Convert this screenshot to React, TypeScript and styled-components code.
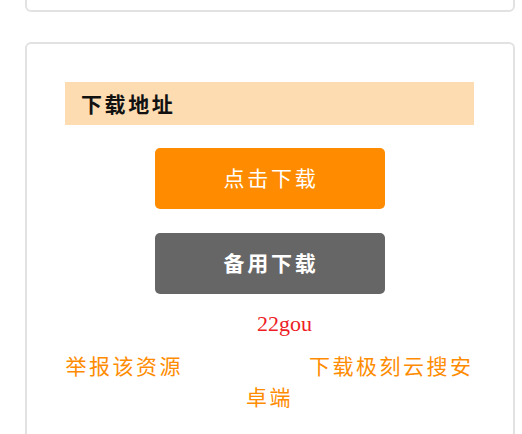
import React from 'react';
import styled, { createGlobalStyle } from 'styled-components';

const GlobalStyle = createGlobalStyle`
  html, body {
    margin: 0;
    padding: 0;
    background-color: #ffffff;
  }
  body {
    font-family: 'Noto Sans CJK SC', 'Noto Sans', sans-serif;
    overflow: hidden;
  }
`;

const Page = styled.div`
  padding: 0 7px 0 25px;
`;

const Card = styled.div`
  border: 2px solid #e2e2e2;
  border-radius: 6px;
  background-color: #ffffff;
`;

const PrevCard = styled(Card)`
  height: 40px;
  margin-top: -32px;
`;

const DownloadCard = styled(Card)`
  margin-top: 30px;
  padding: 38px 39px 40px 38px;
`;

const TitleBar = styled.h3`
  margin: 0;
  height: 43px;
  padding: 0 0 2px 16px;
  box-sizing: border-box;
  display: flex;
  align-items: center;
  background-color: #fddcb1;
  color: #111111;
  font-size: 21px;
  font-weight: 700;
  letter-spacing: 2.6px;
`;

const ButtonList = styled.div`
  display: flex;
  flex-direction: column;
  align-items: center;
  gap: 24px;
  margin-top: 23px;
`;

const DownloadButton = styled.a<{ bg: string; bold?: boolean }>`
  display: flex;
  align-items: center;
  justify-content: center;
  width: 230px;
  height: 61px;
  padding: 0 0 3px 3px;
  box-sizing: border-box;
  border-radius: 5px;
  background-color: ${props => props.bg};
  color: #ffffff;
  font-size: 21px;
  font-weight: ${props => (props.bold ? 700 : 400)};
  letter-spacing: 2.7px;
  text-decoration: none;
  cursor: pointer;
`;

const Source = styled.div`
  margin-top: 15px;
  padding-left: 30px;
  text-align: center;
  font-family: 'Liberation Serif', serif;
  font-size: 22px;
  line-height: 30px;
  color: #ee1c25;
`;

const Links = styled.p`
  margin: 11px 0 0;
  text-align: center;
  font-size: 21px;
  line-height: 31px;
  letter-spacing: 2.5px;
`;

const TextLink = styled.a<{ gap?: number }>`
  color: #ff8c00;
  text-decoration: none;
  margin-left: ${props => props.gap || 0}px;
`;

const App = () => {
  return (
    <>
      <GlobalStyle />
      <Page>
        <PrevCard />
        <DownloadCard>
          <TitleBar>下载地址</TitleBar>
          <ButtonList>
            <DownloadButton bg='#ff8c00'>点击下载</DownloadButton>
            <DownloadButton bg='#666666' bold>
              备用下载
            </DownloadButton>
          </ButtonList>
          <Source>22gou</Source>
          <Links>
            <TextLink>举报该资源</TextLink>
            <TextLink gap={126}>下载极刻云搜安卓端</TextLink>
          </Links>
        </DownloadCard>
      </Page>
    </>
  );
};

export default App;
